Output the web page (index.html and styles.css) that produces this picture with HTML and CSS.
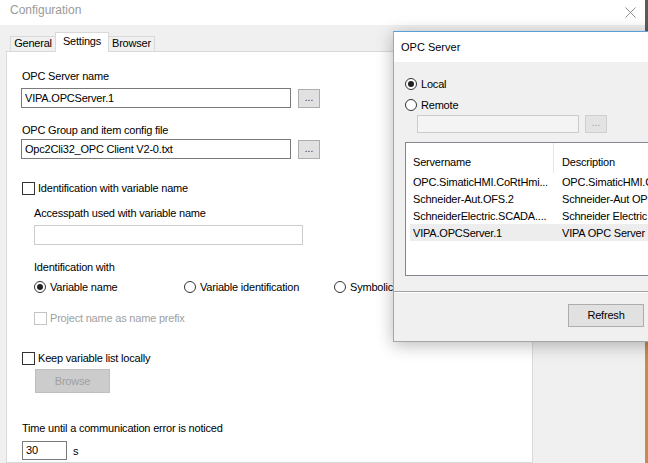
FILE: index.html
```html
<!DOCTYPE html>
<html>
<head>
<meta charset="utf-8">
<title>Configuration</title>
<link rel="stylesheet" href="styles.css">
</head>
<body>
<div class="desk">
  <div class="main">
    <div class="titlebar">
      <span class="title">Configuration</span>
      <svg class="close" width="11" height="11" viewBox="0 0 11 11"><path d="M0.5 0.5L10.5 10.5M10.5 0.5L0.5 10.5" stroke="#8f8f8f" stroke-width="1" fill="none"/></svg>
    </div>
    <div class="client">
      <div class="tabs">
        <div class="tab tg">General</div>
        <div class="tab ts">Settings</div>
        <div class="tab tb-br">Browser</div>
      </div>
      <div class="body">
        <div class="page">
          <div class="lbl l1">OPC Server name</div>
          <div class="row r1">
            <div class="tb tbw">VIPA.OPCServer.1</div>
            <div class="dots">...</div>
          </div>
          <div class="lbl l2">OPC Group and item config file</div>
          <div class="row r2">
            <div class="tb tbw">Opc2Cli32_OPC Client V2-0.txt</div>
            <div class="dots">...</div>
          </div>
          <div class="chk c1"><span class="box"></span><span>Identification with variable name</span></div>
          <div class="indent">
            <div class="lbl l3">Accesspath used with variable name</div>
            <div class="tb tbdis"></div>
            <div class="lbl l4">Identification with</div>
            <div class="radios">
              <div class="rad"><span class="circ on"></span><span>Variable name</span></div>
              <div class="rad"><span class="circ"></span><span>Variable identification</span></div>
              <div class="rad"><span class="circ"></span><span>Symbolic</span></div>
            </div>
            <div class="chk c2 dis"><span class="box"></span><span>Project name as name prefix</span></div>
          </div>
          <div class="chk c3"><span class="box"></span><span>Keep variable list locally</span></div>
          <div class="browse">Browse</div>
          <div class="lbl l5">Time until a communication error is noticed</div>
          <div class="row r3">
            <div class="tb tbs">30</div>
            <span class="unit">s</span>
          </div>
        </div>
        <div class="side"></div>
      </div>
    </div>
  </div>
  <div class="edge"><div class="edge-top"></div><div class="edge-bot"></div></div>

  <div class="dlg">
    <div class="dtitle">OPC Server</div>
    <div class="dbody">
      <div class="rad d-local"><span class="circ on"></span><span>Local</span></div>
      <div class="rad d-remote"><span class="circ"></span><span>Remote</span></div>
      <div class="row d-rrow">
        <div class="tb dtb"></div>
        <div class="dots ddots">...</div>
      </div>
      <div class="list">
        <div class="lhead">
          <div class="c1col">Servername</div>
          <div class="c2col">Description</div>
        </div>
        <div class="lrow"><div class="c1col">OPC.SimaticHMI.CoRtHmi...</div><div class="c2col">OPC.SimaticHMI.CoRtHmiRTm</div></div>
        <div class="lrow"><div class="c1col">Schneider-Aut.OFS.2</div><div class="c2col">Schneider-Aut OPC Factory Server</div></div>
        <div class="lrow"><div class="c1col">SchneiderElectric.SCADA....</div><div class="c2col">Schneider Electric SCADA</div></div>
        <div class="lrow selrow"><div class="c1col">VIPA.OPCServer.1</div><div class="c2col">VIPA OPC Server</div></div>
      </div>
      <div class="sep"></div>
      <div class="refresh">Refresh</div>
    </div>
  </div>
</div>
</body>
</html>
```

FILE: styles.css
```css
* { box-sizing: border-box; margin: 0; padding: 0; }
html, body { width: 648px; height: 463px; overflow: hidden; }
body {
  font-family: "Liberation Sans", Arial, sans-serif;
  font-size: 11px;
  letter-spacing: -0.2px;
  color: #000;
  background: #f0f0f0;
}
.desk { display: flex; width: 648px; height: 463px; position: relative; }
.main { width: 645px; height: 463px; display: flex; flex-direction: column; }

.titlebar {
  height: 25px; background: #fff;
  display: flex; justify-content: space-between; align-items: flex-start;
  padding: 3px 9px 0 10px;
}
.title { font-size: 12px; letter-spacing: 0; line-height: 14px; color: #9a9a9a; }
.close { margin-top: 4px; }

.client { flex: 1; background: #f0f0f0; padding-left: 6px; display: flex; flex-direction: column; }
.tabs { height: 26px; display: flex; align-items: flex-end; padding-left: 4px; }
.tab {
  height: 15px; border: 1px solid #d9d9d9; border-bottom: none;
  background: #f0f0f0; text-align: center; line-height: 13px;
}
.tg { width: 46px; }
.ts { width: 54px; height: 20px; background: #fff; margin: 0 -1px -1px -1px; position: relative; z-index: 1; line-height: 16px; }
.tb-br { width: 47px; }

.body { flex: 1; display: flex; }
.page { width: 527px; border: 1px solid #d9d9d9; background: #fff; padding-left: 15px; }
.side { flex: 1; background: #f0f0f0; }

.lbl { line-height: 14px; }
.l1 { margin-top: 17px; }
.row { display: flex; align-items: center; }
.r1 { margin-top: 5px; }
.l2 { margin-top: 15px; }
.r2 { margin-top: 2px; }

.tb { height: 20px; border: 1px solid #7a7a7a; background: #fff; padding-left: 3px; line-height: 18px; white-space: nowrap; overflow: hidden; }
.tbw { width: 270px; margin-left: -1px; }
.dots {
  width: 22px; height: 19px; margin-left: 7px;
  background: #e1e1e1; border: 1px solid #adadad;
  text-align: center; line-height: 15px; font-size: 10px; letter-spacing: 0; color: #333;
}

.chk { display: flex; align-items: center; line-height: 14px; }
.box { width: 13px; height: 13px; border: 1px solid #333; background: #fff; margin-right: 3px; flex: none; }
.c1 { margin-top: 22px; }
.indent { margin-left: 12px; }
.l3 { margin-top: 11px; }
.tbdis { width: 269px; margin-top: 5px; border-color: #cccccc; }
.l4 { margin-top: 15px; }
.radios { display: grid; grid-template-columns: 150px 150px 150px; margin-top: 6px; }
.rad { display: flex; align-items: center; line-height: 14px; white-space: nowrap; }
.circ {
  width: 12px; height: 12px; border: 1px solid #333; border-radius: 50%;
  margin-right: 4px; display: flex; align-items: center; justify-content: center; flex: none; background: #fff;
}
.circ.on::after { content: ""; width: 6px; height: 6px; border-radius: 50%; background: #222; }
.c2 { margin-top: 17px; }
.dis { color: #a0a0a0; }
.dis .box { border-color: #c4c4c4; }
.c3 { margin-top: 26px; }
.browse {
  width: 75px; height: 24px; margin: 4px 0 0 13px;
  background: #cccccc; border: 1px solid #bfbfbf; color: #a0a0a0;
  text-align: center; line-height: 22px;
}
.l5 { margin-top: 28px; }
.r3 { margin-top: 6px; }
.tbs { width: 45px; height: 19px; line-height: 17px; }
.unit { margin-left: 6px; }

.edge { width: 3px; display: flex; flex-direction: column; }
.edge-top { height: 31px; background: #5a5a5a; }
.edge-bot { flex: 1; background: #c98a4b; }

.dlg {
  position: absolute; left: 393px; top: 31px; width: 300px; height: 311px;
  background: #f0f0f0; border: 1px solid #a6a6a6; border-top-color: #5a9fd8;
  box-shadow: 0 3px 16px rgba(0, 0, 0, 0.28);
}
.dtitle { height: 30px; background: #fff; padding: 8px 0 0 7px; line-height: 14px; letter-spacing: 0; }
.dbody { padding-left: 11px; }
.d-local { margin-top: 15px; }
.d-remote { margin-top: 7px; }
.d-rrow { margin: 3px 0 0 12px; }
.dtb { width: 162px; height: 18px; border-color: #cccccc; background: #f4f4f4; }
.ddots { height: 18px; margin-left: 6px; background: #e3e3e3; border-color: #cfcfcf; color: #a0a0a0; line-height: 14px; }

.list { margin-top: 9px; width: 300px; height: 134px; border: 1px solid #828790; background: #fff; }
.lhead { display: flex; height: 30px; }
.lhead .c1col { border-right: 1px solid #e5e5e5; padding-top: 12px; }
.lhead .c2col { padding-top: 12px; }
.c1col { width: 148px; padding-left: 7px; white-space: nowrap; overflow: hidden; line-height: 14px; flex: none; }
.c2col { padding-left: 8px; white-space: nowrap; line-height: 14px; }
.lrow { display: flex; height: 17px; align-items: center; }
.selrow { background: #ededed; margin-left: 4px; }
.selrow .c1col { width: 144px; padding-left: 3px; }

.sep { margin: 15px 0 0 -11px; height: 2px; border-top: 1px solid #a0a0a0; border-bottom: 1px solid #fff; }
.refresh {
  width: 76px; height: 23px; margin: 11px 0 0 163px;
  background: #e1e1e1; border: 1px solid #adadad;
  text-align: center; line-height: 21px;
}
```
